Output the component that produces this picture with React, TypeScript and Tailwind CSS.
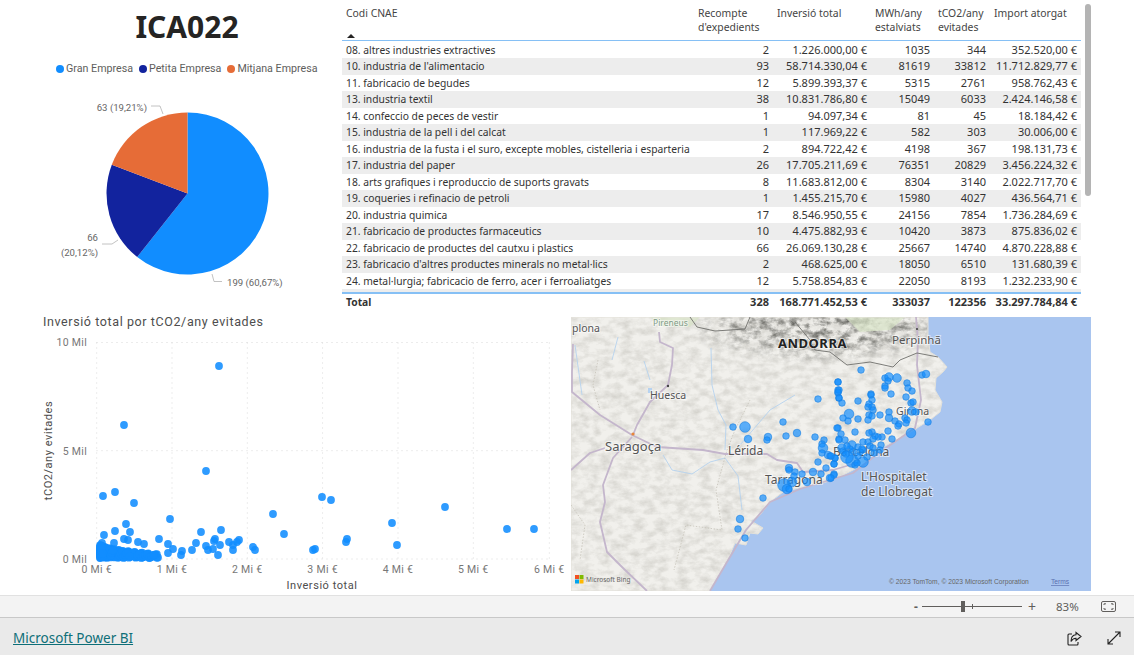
import React from 'react';

const rows = [
  ['08. altres industries extractives', '2', '1.226.000,00 €', '1035', '344', '352.520,00 €'],
  ["10. industria de l'alimentacio", '93', '58.714.330,04 €', '81619', '33812', '11.712.829,77 €'],
  ['11. fabricacio de begudes', '12', '5.899.393,37 €', '5315', '2761', '958.762,43 €'],
  ['13. industria textil', '38', '10.831.786,80 €', '15049', '6033', '2.424.146,58 €'],
  ['14. confeccio de peces de vestir', '1', '94.097,34 €', '81', '45', '18.184,42 €'],
  ['15. industria de la pell i del calcat', '1', '117.969,22 €', '582', '303', '30.006,00 €'],
  ['16. industria de la fusta i el suro, excepte mobles, cistelleria i esparteria', '2', '894.722,42 €', '4198', '367', '198.131,73 €'],
  ['17. industria del paper', '26', '17.705.211,69 €', '76351', '20829', '3.456.224,32 €'],
  ['18. arts grafiques i reproduccio de suports gravats', '8', '11.683.812,00 €', '8304', '3140', '2.022.717,70 €'],
  ['19. coqueries i refinacio de petroli', '1', '1.455.215,70 €', '15980', '4027', '436.564,71 €'],
  ['20. industria quimica', '17', '8.546.950,55 €', '24156', '7854', '1.736.284,69 €'],
  ['21. fabricacio de productes farmaceutics', '10', '4.475.882,93 €', '10420', '3873', '875.836,02 €'],
  ['22. fabricacio de productes del cautxu i plastics', '66', '26.069.130,28 €', '25667', '14740', '4.870.228,88 €'],
  ["23. fabricacio d'altres productes minerals no metal·lics", '2', '468.625,00 €', '18050', '6510', '131.680,39 €'],
  ['24. metal·lurgia; fabricacio de ferro, acer i ferroaliatges', '12', '5.758.854,83 €', '22050', '8193', '1.232.233,90 €'],
  ['', '', '', '', '', ''],
];

const columns = 'grid grid-cols-[352px_79px_98px_63px_56px_91px]';

const legend = [
  ['Gran Empresa', 'bg-[#118dff]'],
  ['Petita Empresa', 'bg-[#12239e]'],
  ['Mitjana Empresa', 'bg-[#e66c37]'],
];

// scatter points, read off the chart in page coordinates
const scatter = [
  [219, 366], [124, 425], [206, 471], [103, 496], [115, 492], [134, 503], [170, 519], [126, 524], [115, 531], [104, 535],
  [130, 532], [201, 532], [221, 530], [124, 539], [128, 540], [102, 543], [114, 543], [159, 539], [138, 542], [144, 544],
  [168, 544], [196, 543], [215, 539], [214, 541], [229, 542], [239, 540], [237, 542], [233, 545], [206, 546], [220, 545],
  [233, 550], [253, 547], [255, 550], [192, 550], [182, 551], [208, 550], [213, 549], [173, 549], [168, 553], [181, 555],
  [218, 555], [273, 514], [284, 534], [322, 497], [331, 500], [445, 507], [392, 523], [507, 529], [534, 529], [347, 539],
  [346, 542], [397, 545], [315, 549], [313, 550],
];
for (let i = 0; i < 200; i++) {
  const t = (i * 0.7549) % 1;
  const u = (i * 0.5698) % 1;
  scatter.push([100 + t * t * 58, 558 - u * (14 - t * 10)]);
}

// map bubbles: x, y, r in page coordinates
const bubbles = [
  [818, 399, 3], [733, 427, 3], [745, 427, 5], [783, 422, 3], [748, 439, 3.5], [768, 437, 3.5], [767, 440, 3], [786, 436, 3],
  [797, 433, 3.5], [815, 437, 3], [824, 440, 3], [822, 444, 3], [823, 448, 4.5], [822, 453, 3], [818, 462, 3], [828, 455, 3.5],
  [830, 456, 3], [835, 458, 3], [834, 464, 3], [826, 468, 3], [813, 472, 3.5], [821, 474, 3], [830, 478, 3.5], [834, 474, 3],
  [789, 468, 3.5], [789, 470, 3], [795, 472, 3], [802, 474, 3], [794, 476, 3], [792, 482, 4.5], [784, 485, 6], [787, 489, 4.5],
  [789, 489, 3], [807, 482, 3.5], [763, 498, 3], [740, 519, 3.5], [738, 529, 3], [745, 538, 3], [838, 382, 3], [838, 390, 3],
  [838, 393, 3], [839, 398, 3], [838, 428, 3], [839, 439, 3], [861, 370, 3], [838, 382, 3], [839, 390, 3], [838, 392, 3],
  [839, 398, 3], [842, 403, 3], [858, 401, 3], [871, 394, 3], [871, 395, 3], [872, 400, 3], [869, 404, 3], [868, 407, 3],
  [872, 407, 3], [873, 410, 3], [869, 415, 3], [872, 416, 3], [868, 420, 3], [858, 419, 3], [849, 414, 4.5], [843, 418, 3],
  [848, 421, 3], [880, 415, 3], [889, 412, 3], [889, 418, 3.5], [895, 421, 3], [899, 424, 3], [898, 426, 3], [905, 418, 3],
  [907, 420, 3], [906, 423, 3], [928, 422, 3], [911, 433, 4.5], [888, 431, 3], [892, 439, 3], [882, 437, 3], [878, 437, 3],
  [875, 436, 3], [872, 432, 3], [869, 433, 3], [855, 432, 3], [837, 428, 3], [841, 434, 3], [839, 440, 3], [845, 440, 3],
  [852, 445, 4], [842, 448, 4], [843, 451, 3], [846, 454, 3], [853, 451, 3], [858, 447, 3], [863, 442, 3], [868, 442, 3],
  [870, 446, 3], [873, 439, 3], [873, 448, 3], [881, 445, 3], [880, 450, 3], [874, 453, 3], [867, 457, 3], [863, 462, 5],
  [852, 461, 6], [847, 457, 6], [855, 465, 3], [857, 463, 3], [834, 464, 3], [835, 458, 3], [831, 456, 3], [834, 475, 3],
  [831, 478, 3], [885, 378, 3], [889, 377, 4], [897, 378, 4], [888, 381, 3], [885, 386, 3], [885, 388, 3], [891, 394, 3],
  [907, 383, 3], [908, 388, 3], [912, 391, 3], [906, 397, 3], [911, 403, 3], [913, 402, 3], [912, 411, 4], [916, 412, 3],
  [922, 375, 3], [926, 374, 3.5], [863, 450, 3], [860, 452, 3], [850, 449, 3], [858, 456, 3], [862, 449, 3], [847, 446, 3],
];

const land =
  'M571 317 L928 317 L928 335 L930 352 L938 357 L947 367 L943 372 L936 378 L935 390 L942 402 L940 412 L930 420 L917 428 L902 437 L887 445 L873 453 L867 462 L853 470 L837 478 L823 483 L803 487 L783 492 L770 502 L760 515 L751 521 L763 528 L758 534 L750 533 L746 545 L735 543 L727 562 L713 585 L710 591 L571 591 Z';

const Scatter = () => (
  <svg viewBox="0 311 571 284" className="block h-[284px] w-[571px]" fontFamily="Roboto, sans-serif">
    <text x="43" y="326" fontSize="12.5" letterSpacing="0.6" fill="#4d4d4d">Inversió total por tCO2/any evitades</text>
    {[342.5, 450.7, 559].map((y) => (
      <line key={y} x1="96.5" x2="549.5" y1={y} y2={y} stroke="#d9d9d9" strokeDasharray="1 4" />
    ))}
    {[96.7, 172, 247.3, 322.6, 398, 473.3, 549.3].map((x, i) => (
      <g key={x}>
        <line x1={x} x2={x} y1="342.5" y2="559" stroke="#d9d9d9" strokeDasharray="1 4" />
        <text x={x} y="572.5" textAnchor="middle" fontSize="10.5" letterSpacing="0.3" fill="#777777">{i} Mi €</text>
      </g>
    ))}
    {[['10 Mil', 346], ['5 Mil', 454.5], ['0 Mil', 562.5]].map(([label, y]) => (
      <text key={label} x="87" y={y} textAnchor="end" fontSize="10.5" letterSpacing="0.3" fill="#777777">{label}</text>
    ))}
    <text x="322" y="589" textAnchor="middle" fontSize="11" letterSpacing="0.55" fill="#4d4d4d">Inversió total</text>
    <text transform="translate(52 450.5) rotate(-90)" textAnchor="middle" fontSize="11" letterSpacing="0.55" fill="#4d4d4d">tCO2/any evitades</text>
    {scatter.map(([x, y], i) => (
      <circle key={i} cx={x} cy={y} r="3.9" fill="#118dff" fillOpacity="0.88" />
    ))}
  </svg>
);

const MapView = () => (
  <svg viewBox="571 317 520 274" className="mt-[6px] block h-[274px] w-[520px]" fontFamily="'Noto Sans', sans-serif">
    <defs>
      <filter id="hills" x="0" y="0" width="100%" height="100%" colorInterpolationFilters="sRGB">
        <feTurbulence type="fractalNoise" baseFrequency="0.09 0.14" numOctaves="4" seed="8" />
        <feColorMatrix values="0 0 0 0 0.55  0 0 0 0 0.54  0 0 0 0 0.5  0.55 0 0 0 -0.2" />
      </filter>
      <filter id="ridge" x="0" y="0" width="100%" height="100%" colorInterpolationFilters="sRGB">
        <feTurbulence type="fractalNoise" baseFrequency="0.1 0.16" numOctaves="4" seed="3" />
        <feColorMatrix values="0 0 0 0 0.35  0 0 0 0 0.35  0 0 0 0 0.33  2.4 0 0 0 -0.95" />
      </filter>
      <clipPath id="landClip"><path d={land} /></clipPath>
      <radialGradient id="ridgeFade" cx="0.55" cy="0.1" r="0.55">
        <stop offset="0" stopColor="white" />
        <stop offset="0.55" stopColor="white" stopOpacity="0.7" />
        <stop offset="1" stopColor="white" stopOpacity="0" />
      </radialGradient>
      <mask id="ridgeMask">
        <rect x="680" y="317" width="260" height="75" fill="url(#ridgeFade)" />
      </mask>
    </defs>
    <rect x="571" y="317" width="520" height="274" fill="#a9c5ef" />
    <path d={land} fill="#f1f0ec" />
    <g clipPath="url(#landClip)">
      <rect x="571" y="317" width="380" height="274" filter="url(#hills)" />
      <g mask="url(#ridgeMask)">
        <rect x="680" y="317" width="260" height="75" filter="url(#ridge)" />
      </g>
      <path d="M650 317 L700 317 L690 327 L660 326 Z M845 317 L905 317 L890 330 L860 332 Z" fill="#d8e4c8" opacity="0.7" />
    </g>
    <path d={land} fill="none" stroke="#e3e1da" strokeWidth="1" />
    <g fill="none" stroke="#b5d2ee" strokeWidth="0.9">
      <path d="M711 348 L712 385 L718 410 L726 425 L725 450" />
      <path d="M644 361 L650 380 M663 455 L672 470 L692 474 L710 462 L725 458 L738 476 L742 510" />
      <path d="M740 445 L770 410 L795 395" />
      <path d="M575 345 L582 395 M618 337 L612 360" />
    </g>
    <g fill="none" stroke="#c7c3b9" strokeWidth="0.8" strokeDasharray="1.5 1.5">
      <path d="M598 360 L593 385 L600 410 M750 400 L735 430 L727 450 L716 490 L722 530 L686 525 L674 570" />
      <path d="M571 505 L585 525 L580 560" />
    </g>
    <g fill="none" stroke="#c4b6cc" strokeWidth="1.8" strokeLinejoin="round">
      <path d="M573 344 L572 372 L572 392 L600 415 L632 435 L657 447 L703 450 L725 454 L767 454 L777 460 L797 463 L803 472 L833 470 L860 462" />
      <path d="M659 332 L660 342 L673 348 L672 365 L668 385 L650 402 L637 425 L633 435" />
      <path d="M571 470 L590 453 L605 448" />
      <path d="M632 437 L613 458 L603 485 L605 502 L600 522 L607 552 L623 568 L647 591" />
      <path d="M710 591 L727 562 L746 530 L770 502 L800 489 L853 473 L880 452 L915 428 L921 400 L917 365 L918 340 L916 317" />
    </g>
    <g fill="none" stroke="#6f6f6c" strokeWidth="0.9">
      <path d="M690 317 L697 327 L715 331 L745 329 L750 317 M795 322 L810 340 L815 350 L830 352 L847 365 L870 362 L893 367 L900 360 L917 353 L938 357" />
    </g>
    <circle cx="668" cy="386" r="1.2" fill="#444" />
    <circle cx="633" cy="434" r="1.6" fill="#e8853a" />
    <circle cx="917" cy="329" r="1.1" fill="#444" />
    <path d="M648 388 h4 v5 h-4 z" fill="#b6d2f0" />
    <g fill="#555555" stroke="#ffffff" strokeWidth="2" strokeOpacity="0.55" paintOrder="stroke">
      <text x="653" y="326" fontSize="8.5" fill="#7f9b86">Pireneus</text>
      <text x="572" y="332" fontSize="10.5">plona</text>
      <text x="650" y="399" fontSize="10.5">Huesca</text>
      <text x="605" y="451" fontSize="13">Saragoça</text>
      <text x="728" y="455" fontSize="12">Lérida</text>
      <text x="765" y="484" fontSize="12">Tarragona</text>
      <text x="833" y="456" fontSize="12">Barcelona</text>
      <text x="896" y="415" fontSize="10.5">Girona</text>
      <text x="892" y="344" fontSize="11.5">Perpinhã</text>
      <text x="861" y="481" fontSize="12">L'Hospitalet</text>
      <text x="861" y="496" fontSize="12">de Llobregat</text>
      <text x="778" y="348" fontSize="13" fontWeight="700" letterSpacing="0.5" fill="#222222">ANDORRA</text>
    </g>
    {bubbles.map(([x, y, r], i) => (
      <circle key={i} cx={x} cy={y} r={r + 0.3} fill="#118dff" fillOpacity="0.68" stroke="#1a7fe0" strokeWidth="0.6" />
    ))}
    <g>
      <rect x="575" y="575" width="4" height="4" fill="#f25022" />
      <rect x="579.5" y="575" width="4" height="4" fill="#7fba00" />
      <rect x="575" y="579.5" width="4" height="4" fill="#00a4ef" />
      <rect x="579.5" y="579.5" width="4" height="4" fill="#ffb900" />
      <text x="586" y="582" fontSize="6.5" fill="#666666">Microsoft Bing</text>
    </g>
    <text x="889" y="584" fontSize="6.7" fill="#666666" fontFamily="'Liberation Sans', sans-serif">© 2023 TomTom, © 2023 Microsoft Corporation</text>
    <text x="1051" y="584" fontSize="6.7" fill="#5a6fb0" textDecoration="underline" fontFamily="'Liberation Sans', sans-serif">Terms</text>
  </svg>
);

const Pie = () => (
  <svg viewBox="0 90 342 210" className="block h-[210px] w-[342px]" fontFamily="Roboto, sans-serif">
    <path d="M187.5 193.5 L187.5 112.5 A81 81 0 1 1 137.2 257 Z" fill="#118dff" />
    <path d="M187.5 193.5 L137.2 257 A81 81 0 0 1 111.8 164.7 Z" fill="#12239e" />
    <path d="M187.5 193.5 L111.8 164.7 A81 81 0 0 1 187.5 112.5 Z" fill="#e66c37" />
    <g fill="none" stroke="#b3b3b3" strokeWidth="0.8">
      <path d="M151 106 H160 L163 114" />
      <path d="M102 244 H112 L118 240" />
      <path d="M212 274 L214 281.5 H222" />
    </g>
    <g fontSize="9.6" fill="#666666">
      <text x="147" y="111" textAnchor="end">63 (19,21%)</text>
      <text x="98" y="241" textAnchor="end">66</text>
      <text x="98" y="256" textAnchor="end">(20,12%)</text>
      <text x="227" y="285.5">199 (60,67%)</text>
    </g>
  </svg>
);

const App = () => {
  return (
    <div className="flex h-[655px] w-[1134px] flex-col overflow-hidden bg-white font-['Noto_Sans',sans-serif]">
      <div className="h-[595px] shrink-0">
        <div className="grid h-[311px] grid-cols-[342px_739px_10px]">
          <div>
            <h1 className="flex h-[54px] items-center justify-center pl-[32px] text-[30px] font-bold leading-none text-[#252423]">ICA022</h1>
            <div className="flex h-[26px] items-center gap-[6px] whitespace-nowrap pl-[56px] pt-[4px] font-['Roboto',sans-serif] text-[10.7px] text-[#605e5c]">
              {legend.map(([label, dot]) => (
                <div key={label} className="flex items-center gap-[2px]">
                  <span className={`h-[8px] w-[8px] rounded-full ${dot}`} />
                  <span>{label}</span>
                </div>
              ))}
            </div>
            <div className="mt-[10px]">
              <Pie />
            </div>
          </div>

          <div className="text-[11px] text-[#333333]">
            <div className={`${columns} h-[41px] border-b border-[#86c0f5] text-[10.4px] leading-[14px] text-[#444444]`}>
              <div className="relative pl-[4px] pt-[6px]">
                Codi CNAE
                <span className="absolute bottom-[2px] left-[5px] h-0 w-0 border-x-[4px] border-b-[4px] border-x-transparent border-b-[#252423]" />
              </div>
              <div className="pl-[4px] pt-[6px]">Recompte d'expedients</div>
              <div className="pl-[4px] pt-[6px]">Inversió total</div>
              <div className="pl-[4px] pt-[6px]">MWh/any estalviats</div>
              <div className="pl-[4px] pt-[6px]">tCO2/any evitades</div>
              <div className="pl-[4px] pt-[6px]">Import atorgat</div>
            </div>
            <div className="h-[251px] overflow-hidden pt-[0.5px]">
              {rows.map((row, i) => (
                <div key={i} className={`${columns} h-[16.5px] items-center leading-[16px] ${i % 2 === 1 ? 'bg-[#ededed]' : 'bg-white'}`}>
                  <div className="truncate pl-[4px] text-[10.3px]">{row[0]}</div>
                  {row.slice(1).map((cell, j) => (
                    <div key={j} className="pr-[4px] text-right">{cell}</div>
                  ))}
                </div>
              ))}
            </div>
            <div className={`${columns} h-[19px] items-center border-t-2 border-[#86c0f5] pb-[1px] font-bold text-[#333333]`}>
              <div className="pl-[4px] text-[10.3px]">Total</div>
              <div className="pr-[4px] text-right">328</div>
              <div className="pr-[4px] text-right">168.771.452,53 €</div>
              <div className="pr-[4px] text-right">333037</div>
              <div className="pr-[4px] text-right">122356</div>
              <div className="pr-[4px] text-right">33.297.784,84 €</div>
            </div>
          </div>

          <div className="pl-[4px] pt-[4px]">
            <div className="h-[192px] w-[6px] rounded-full bg-[#b4b4b4]" />
          </div>
        </div>

        <div className="flex items-start">
          <Scatter />
          <MapView />
        </div>
      </div>

      <div className="flex h-[23px] shrink-0 items-center border-y border-t-[#e1e1e1] border-b-[#c8c8c8] bg-[#f3f3f3] text-[#605e5c]">
        <div className="ml-[912px] flex items-center">
          <span className="w-[8px] text-center text-[12px] font-bold leading-none">-</span>
          <div className="relative ml-[2px] h-[1px] w-[100px] bg-[#605e5c]">
            <span className="absolute top-[-5px] left-[39px] h-[11px] w-[4px] bg-[#605e5c]" />
            <span className="absolute top-[-2px] left-[50px] h-[5px] w-[1px] bg-[#605e5c]" />
          </div>
          <span className="ml-[5px] w-[10px] text-center text-[14px] leading-none">+</span>
          <span className="ml-[19px] text-[11.5px]">83%</span>
          <svg width="15" height="11" viewBox="0 0 15 11" className="ml-[22px]" fill="none" stroke="#605e5c" strokeWidth="1">
            <rect x="0.5" y="0.5" width="14" height="10" rx="1.5" />
            <path d="M3 4 V2.8 H5 M10 2.8 H12 V4 M3 7 V8.2 H5 M10 8.2 H12 V7" />
          </svg>
        </div>
      </div>

      <div className="flex flex-1 items-center bg-[#eaeaea] pl-[13px] pt-[3px]">
        <a href="#" className="w-[120px] whitespace-nowrap text-[13.5px] text-[#0e6f78] underline">Microsoft Power BI</a>
        <svg width="15" height="15" viewBox="0 0 15 15" className="ml-[934px]" fill="none" stroke="#222222" strokeWidth="1.1">
          <path d="M5 3 H2 A1 1 0 0 0 1 4 V13 A1 1 0 0 0 2 14 H10 A1 1 0 0 0 11 13 V11" />
          <path d="M9 1.5 L14 5.5 L9 9.5 V7.3 C6.5 7.3 5 8.5 4 10.5 C4 6.5 6 4 9 3.8 Z" />
        </svg>
        <svg width="14" height="14" viewBox="0 0 14 14" className="ml-[25px]" fill="none" stroke="#222222" strokeWidth="1.1">
          <path d="M1 13 L13 1 M8 1 H13 V6 M1 8 V13 H6" />
        </svg>
      </div>
    </div>
  );
};

export default App;
